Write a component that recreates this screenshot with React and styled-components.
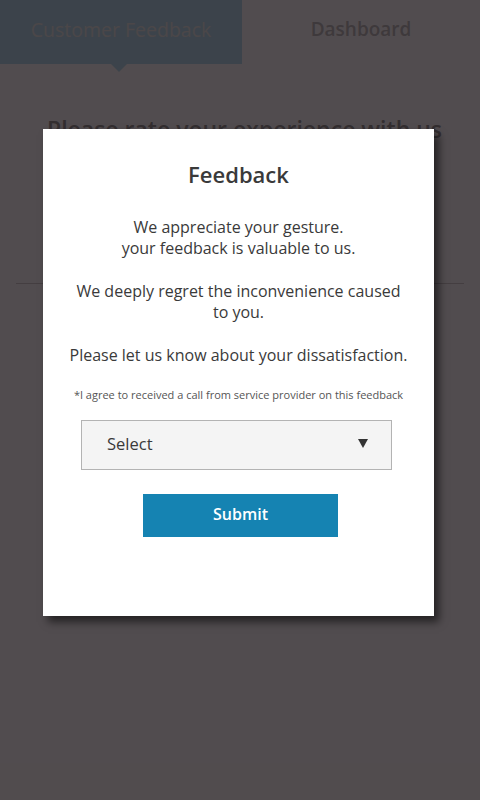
import React from 'react';
import styled, { createGlobalStyle } from 'styled-components';

const GlobalStyle = createGlobalStyle`
  html, body {
    margin: 0;
    padding: 0;
    background: #fff;
  }
  body {
    font-family: "Open Sans", "Noto Sans", sans-serif;
    color: #333;
  }
`;

const Page = styled.div`
  position: relative;
  width: 480px;
  height: 800px;
  overflow: hidden;
  background: #f6f2f3;
`;

const Tabs = styled.div`
  display: flex;
  height: 64px;
`;

const Tab = styled.div`
  position: relative;
  display: flex;
  align-items: center;
  justify-content: center;
  width: ${(p) => (p.active ? '242px' : 'auto')};
  flex: ${(p) => (p.active ? 'none' : '1')};
  padding-bottom: 6px;
  box-sizing: border-box;
  background: ${(p) => (p.active ? '#aed4e6' : 'transparent')};
  color: ${(p) => (p.active ? '#e0e0e0' : '#b5b3b4')};
  font-size: ${(p) => (p.active ? '19.5px' : '19px')};
  font-weight: ${(p) => (p.active ? 400 : 600)};

  &::after {
    content: '';
    display: ${(p) => (p.active ? 'block' : 'none')};
    position: absolute;
    left: 111px;
    bottom: -8px;
    border-left: 8px solid transparent;
    border-right: 8px solid transparent;
    border-top: 8px solid #aed4e6;
  }
`;

const Content = styled.div`
  padding: 49px 16px 0;
`;

const Heading = styled.h2`
  margin: 0 0 0 31px;
  font-size: 23px;
  font-weight: 600;
  color: #8f8d8e;
  white-space: nowrap;
`;

const Divider = styled.hr`
  margin: 138px 0 0;
  border: 0;
  border-top: 1px solid #c8c4c5;
`;

const Overlay = styled.div`
  position: absolute;
  inset: 0;
  background: rgba(11, 6, 8, 0.7);
`;

const Modal = styled.div`
  position: absolute;
  left: 43px;
  top: 129px;
  width: 391px;
  height: 487px;
  box-sizing: border-box;
  background: #fff;
  box-shadow: 5px 6px 8px rgba(0, 0, 0, 0.55);
  display: flex;
  flex-direction: column;
  align-items: center;
  padding-top: 30px;
  text-align: center;
  color: #3a3a3a;
`;

const Title = styled.h1`
  margin: 0 0 28px;
  font-size: 22px;
  font-weight: 600;
  color: #3a3a3a;
  line-height: 30px;
`;

const Message = styled.p`
  margin: 0 0 22px;
  font-size: 16px;
  line-height: 21px;
  padding: 0 25px;
`;

const Note = styled.p`
  margin: 0 0 18px;
  font-size: 11px;
  line-height: 14px;
  color: #555;
`;

const SelectBox = styled.div`
  display: flex;
  align-items: center;
  justify-content: space-between;
  width: 311px;
  height: 50px;
  box-sizing: border-box;
  padding: 0 23px 4px 25px;
  margin: 0 4px 24px 0;
  background: #f4f4f4;
  border: 1px solid #b3b3b3;
  font-size: 16.5px;
  color: #3a3a3a;
`;

const Arrow = styled.span`
  width: 0;
  height: 0;
  border-left: 5.5px solid transparent;
  border-right: 5.5px solid transparent;
  border-top: 9px solid #333;
`;

const SubmitButton = styled.button`
  width: 195px;
  height: 43px;
  margin-left: 4px;
  padding: 0 0 4px;
  border: 0;
  background: #1583b2;
  color: #fff;
  font-family: inherit;
  font-size: 16px;
  font-weight: 600;
  cursor: pointer;
`;

const App = () => (
  <>
    <GlobalStyle />
    <Page>
      <Tabs>
        <Tab active>Customer Feedback</Tab>
        <Tab>Dashboard</Tab>
      </Tabs>
      <Content>
        <Heading>Please rate your experience with us</Heading>
        <Divider />
      </Content>
      <Overlay />
      <Modal>
        <Title>Feedback</Title>
        <Message>
          We appreciate your gesture.
          <br />
          your feedback is valuable to us.
        </Message>
        <Message>We deeply regret the inconvenience caused to you.</Message>
        <Message>Please let us know about your dissatisfaction.</Message>
        <Note>*I agree to received a call from service provider on this feedback</Note>
        <SelectBox>
          <span>Select</span>
          <Arrow />
        </SelectBox>
        <SubmitButton type="button">Submit</SubmitButton>
      </Modal>
    </Page>
  </>
);

export default App;
